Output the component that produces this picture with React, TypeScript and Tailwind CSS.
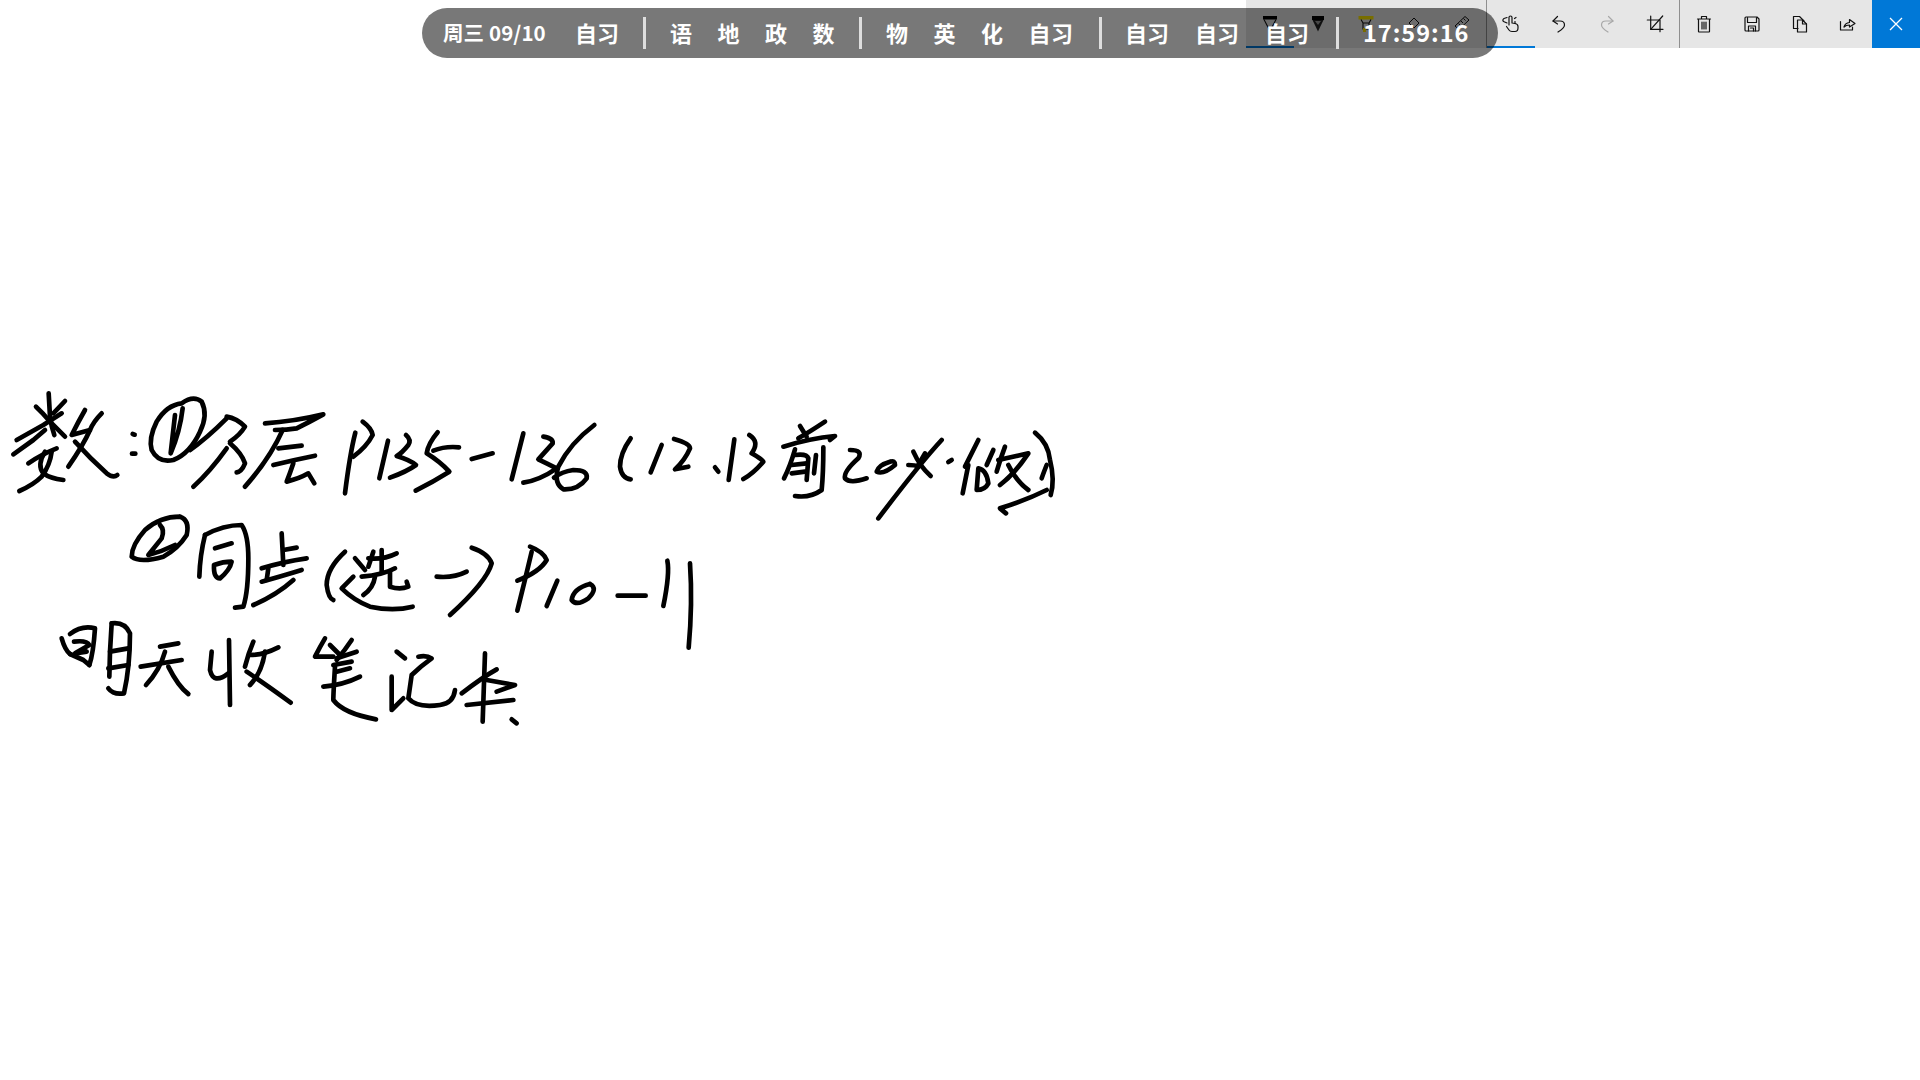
import React from "react";

const g1 = [
  "M146 25L150 95Q154 125 163 150","M195 48L160 85","M108 65Q130 85 150 110Q170 130 195 155","M50 165L130 120L185 85","M40 208L100 165L135 135","M85 235Q120 210 170 190","M135 200Q110 240 130 265Q150 280 190 285","M58 318Q100 300 125 275Q150 240 155 200",
  "M255 75Q235 110 215 150L270 135","M305 85Q280 110 270 135Q250 180 205 245","M225 170Q270 220 320 265Q340 280 352 270",
  "M398 147L404 149","M396 206L406 206",
  "M545 55Q500 60 470 110Q445 160 455 195Q475 235 520 225Q570 205 600 140Q625 90 605 50Q580 30 545 55","M525 90L512 205Q540 140 548 70",
  "M570 195Q620 160 680 100","M680 95Q710 100 735 125Q720 150 690 170","M690 175Q725 205 735 235Q725 260 710 262","M580 305Q630 260 680 190",
  "M795 115Q880 110 970 88Q930 110 890 130Q860 135 825 135","M848 135Q810 220 735 305","M835 190L905 182","M820 240Q880 225 945 212","M880 235Q870 265 860 290Q900 280 925 265L943 295",
];
const g2 = [
  "M76 68Q60 130 45 250","M98 35Q125 55 128 75Q110 110 70 140","M174 92L148 205","M228 75Q245 90 235 105Q215 130 200 138Q240 150 258 165Q230 185 180 203","M323 67Q295 100 290 130Q330 155 358 185Q310 215 257 242","M310 122Q345 108 387 112","M425 147L488 130","M580 70L545 208","M640 80Q670 85 668 100L625 148Q650 160 680 175Q630 210 580 218","M793 45Q720 100 685 170Q670 220 700 238Q745 240 770 205Q775 180 730 180Q695 185 672 203",
];
const g3 = [
  "M62 85Q30 130 30 170Q35 205 62 208","M155 105L122 187","M192 87Q240 100 240 115Q225 150 195 178L235 170","M315 172L325 185","M373 88L356 210","M418 75Q450 95 425 130Q460 150 460 155Q430 190 400 207",
  "M570 48L590 80","M645 35Q600 65 565 85","M520 110Q600 85 675 78L660 90","M555 118Q540 170 522 205","M555 135Q590 130 595 145L590 210","M545 165L590 160","M545 190L585 185","M618 135L612 190","M640 112Q640 190 635 240Q600 265 555 258",
  "M720 120Q760 120 745 145Q700 185 705 205Q720 222 770 205","M840 155Q805 165 800 185Q820 195 855 165Q855 150 840 155",
  "M995 90Q930 160 805 325","M895 165Q915 165 925 170","M910 125Q930 170 962 198","M945 130L925 165","M1015 156L1025 150",
  "M1105 90Q1085 130 1065 170","M1075 165L1058 250","M1150 120L1130 165","M1105 175L1100 240Q1125 240 1135 220Q1130 180 1105 175","M1185 110Q1170 150 1160 185","M1165 150L1255 130Q1215 190 1170 225","M1195 165Q1220 215 1255 240",
  "M1275 68Q1315 100 1320 150Q1335 210 1322 255","M1310 165Q1300 190 1295 205","M1310 240Q1250 270 1170 295L1188 310",
];
const g4 = [
  "M180 35Q120 35 75 75Q35 120 35 155Q60 175 130 155Q175 130 200 90Q210 45 180 35","M120 60Q135 75 125 100L85 150Q125 140 165 120",
  "M255 90Q240 150 238 215","M255 90Q310 60 365 60Q385 90 385 160Q385 260 370 305L345 308","M285 130L335 115","M282 180Q280 220 300 220Q330 195 335 170Q310 170 282 180",
  "M485 85L490 180","M490 135L530 128","M425 190Q490 170 560 160","M440 225L445 190","M425 230Q480 215 545 195","M520 225Q470 270 400 300",
  "M675 140Q620 190 620 240Q625 280 640 285",
  "M705 160L735 195","M700 215L665 250Q700 285 750 305Q820 320 878 305","M760 140L745 185","M745 160Q790 165 830 145","M725 215Q790 210 825 190","M785 135L785 200","M765 215Q760 250 730 270","M810 200L810 245Q840 255 865 245L860 230",
  "M950 215Q1000 220 1040 200","M1055 128Q1105 145 1115 175Q1100 230 990 330",
];
const g5 = [
  "M90 50Q130 65 140 90Q120 125 52 152","M95 65Q75 150 52 242","M172 152L140 228","M270 162Q220 175 215 210Q230 230 265 205Q295 175 270 162","M353 197L437 197","M502 92Q510 130 490 228","M570 100Q578 220 566 353",
];
const g6 = [
  "M35 85Q45 120 60 132","M60 72Q95 45 135 55Q130 130 118 165","M60 132L100 150L118 165","M72 95Q110 90 118 105L75 130L110 125",
  "M185 40L180 125L178 200","M185 40Q225 35 240 70Q240 170 222 250Q190 255 175 235","M180 125L235 115","M175 175L235 165",
  "M330 110L385 100","M272 170L395 150","M345 125Q330 180 288 225","M355 170Q385 230 415 252",
  "M485 125L480 180Q490 225 535 190","M537 90L540 285","M610 95Q595 130 585 170","M600 135Q640 135 685 112","M645 125Q635 190 600 225","M590 185Q650 225 722 278",
  "M825 85Q810 110 795 140L850 140","M840 105L870 135","M905 90Q885 120 860 150","M860 145L920 125","M850 165L905 155","M860 185L900 175","M820 230Q880 225 930 200","M855 170Q850 250 850 270Q880 310 978 328",
  "M1040 125L1065 145","M1025 200L1025 300L1060 265","M1105 140Q1130 135 1145 145Q1110 170 1085 195L1075 265Q1100 295 1170 285Q1210 280 1215 240",
  "M1305 130L1298 335","M1235 250Q1300 200 1340 178","M1310 210L1395 225L1340 245","M1250 285L1390 270","M1385 328L1400 340",
];

const Strokes = ({ x, y, d }: { x: number; y: number; d: string[] }) => (
  <g transform={`translate(${x} ${y}) scale(${1 / 3})`}>
    {d.map((p, i) => (
      <path key={i} d={p} />
    ))}
  </g>
);

const Ink = () => (
  <svg viewBox="0 48 1920 1032" className="block w-[1920px] h-[1032px]" fill="none" stroke="#000" strokeWidth={14} strokeLinecap="round" strokeLinejoin="round">
    <title>数:①分层 P135-136 (12.13前20%·做) ②同步(选一) P10-11 明天收笔记本</title>
    <Strokes x={0} y={385} d={g1} />
    <Strokes x={330} y={410} d={g2} />
    <Strokes x={610} y={410} d={g3} />
    <Strokes x={120} y={505} d={g4} />
    <Strokes x={500} y={530} d={g5} />
    <Strokes x={50} y={610} d={g6} />
  </svg>
);

const Ico = ({ children, stroke = "#111" }: { children: React.ReactNode; stroke?: string }) => (
  <svg width="20" height="20" viewBox="0 0 20 20" fill="none" stroke={stroke} strokeWidth={1.2} strokeLinecap="round" strokeLinejoin="round">
    {children}
  </svg>
);

const Btn = ({ children, active }: { children: React.ReactNode; active?: boolean }) => (
  <div className={`w-12 h-12 flex items-center justify-center ${active ? "border-b-2 border-[#0078d7] pt-[2px]" : ""}`}>{children}</div>
);

const Toolbar = () => (
  <div className="flex justify-end h-12">
    <div className="w-[674px] h-12 flex bg-[#e6e6e6]">
      <div className="w-60 h-12" />
      <div className="w-px h-12 bg-[#8f8f8f]" />
      <Btn active>
        <Ico>
          <path d="M8 11V3.500a1.500 1.500 0 0 1 3 0V9l3 .5q3 .5 3 3V14q0 3.500-3 3.500H11q-2 0-3-1.500L5.500 12.500" />
          <path d="M6 3.500L3 4.500Q1 6 2.500 7.500L6 9" />
          <path d="M13.500 4.500L15 3.500" />
          <path d="M14 9.500V7.500" />
        </Ico>
      </Btn>
      <Btn>
        <Ico>
          <path d="M8.500 2.500L4 7L8.500 10" />
          <path d="M4 7H11Q15.500 7 15.500 11Q15.500 14 9 18" />
        </Ico>
      </Btn>
      <Btn>
        <Ico stroke="#a8a8a8">
          <path d="M11.500 2.500L16 7L11.500 10" />
          <path d="M16 7H9Q4.500 7 4.500 11Q4.500 14 11 18" />
        </Ico>
      </Btn>
      <Btn>
        <Ico>
          <path d="M2.300 6H15V17.700" />
          <path d="M5.700 2V15.300H18" />
          <path d="M5.700 15.300L17.700 2" />
        </Ico>
      </Btn>
      <div className="w-px h-12 bg-[#8f8f8f]" />
      <Btn>
        <Ico>
          <path d="M3.500 5H16.500M7.500 5V2.500H12.500V5M4.500 5V17.500Q4.500 18 5 18H15Q15.500 18 15.500 17.500V5M8 8V15M10 8V15M12 8V15" />
        </Ico>
      </Btn>
      <Btn>
        <Ico>
          <path d="M3 4Q3 3 4 3H15L17 5V16Q17 17 16 17H4Q3 17 3 16Z" />
          <path d="M5.500 3.500V8.500H14.500V3.500M6.500 17V12H13.500V17M8.500 14H11.500V17" />
        </Ico>
      </Btn>
      <Btn>
        <Ico>
          <path d="M8 14.500H3.500V2.500H9.500L14 7" />
          <path d="M7.500 6H12.500L16.500 10V18H7.500Z" />
          <path d="M12.500 6V10H16.500" />
        </Ico>
      </Btn>
      <Btn>
        <Ico>
          <path d="M2.500 7.500V16H14.500V13" />
          <path d="M6 13Q7 9 11.500 8.500V5.500L17 9.500L11.500 13V11Q8 11 6 13Z" />
        </Ico>
      </Btn>
      <div className="w-12 h-12 flex items-center justify-center bg-[#0078d7]">
        <svg width="16" height="16" viewBox="0 0 16 16" stroke="#fff" strokeWidth={1.3}>
          <path d="M2 2L14 14M14 2L2 14" />
        </svg>
      </div>
    </div>
  </div>
);

/* pen tray: sits behind the translucent class-schedule pill */
const Pens = () => (
  <div className="absolute left-[1246px] top-0 w-[240px] h-12 flex">
    <div className="w-12 h-12 border-b-2 border-[#0078d7] flex justify-center pt-4">
      <svg width="20" height="26" viewBox="0 0 20 26" fill="none" stroke="#111" strokeWidth={1.1}>
        <rect x="3" y="0" width="14" height="3.500" fill="#000" stroke="none" />
        <path d="M4 3.500L10 15L16 3.500" />
        <path d="M10 15V20" stroke="#0078d7" strokeWidth={2} />
      </svg>
    </div>
    <div className="w-12 h-12 flex justify-center pt-4">
      <svg width="20" height="26" viewBox="0 0 20 26">
        <rect x="4" y="0" width="12" height="4" fill="#000" />
        <path d="M4.500 4L10 15.500L15.500 4Z" fill="#222" />
        <path d="M7 5H13L10 9Z" fill="#999" />
      </svg>
    </div>
    <div className="w-12 h-12 flex justify-center pt-4">
      <svg width="20" height="26" viewBox="0 0 20 26" fill="none" stroke="#111" strokeWidth={1.1}>
        <rect x="2.500" y="0" width="15" height="3.500" fill="#ffea00" stroke="none" />
        <path d="M5 3.500L7 7H13L15 3.500M7 7V13H13V7" />
        <path d="M7 12H10V16H7Z" fill="#ffe600" stroke="none" />
      </svg>
    </div>
    <div className="w-12 h-12 flex justify-center pt-4">
      <svg width="20" height="26" viewBox="0 0 20 26" fill="none" stroke="#111" strokeWidth={1}>
        <path d="M10 2L15 7L10 12L5 7Z" />
      </svg>
    </div>
    <div className="w-12 h-12 flex justify-center pt-4">
      <svg width="20" height="26" viewBox="0 0 20 26" fill="none" stroke="#111" strokeWidth={1}>
        <path d="M13 0.500L17 4L7 13.500L3 10Z" />
        <path d="M11.500 2.500L13.500 4.500M9 5L11 7M6.500 7.500L8.500 9.500" />
      </svg>
    </div>
  </div>
);

const Sep = () => <div className="w-[3px] h-8 bg-[#dedede]" />;

const Pill = () => (
  <div className="absolute left-[422px] top-2 w-[1076px] h-[50px] rounded-[25px] bg-black/[0.53] flex items-center text-white font-bold text-[22px] leading-none font-['Noto_Sans_CJK_SC','sans-serif'] whitespace-nowrap">
    <span className="ml-[21px] mb-[2px] w-[103px] text-[20.500px] tracking-[0.1px]">周三 09/10</span>
    <span className="ml-[29px] mb-[2px] w-[44px]">自习</span>
    <div className="ml-[24px] mr-[24px]"><Sep /></div>
    <div className="flex mb-[2px] gap-[25.500px] w-[165px]">
      <span>语</span>
      <span>地</span>
      <span>政</span>
      <span>数</span>
    </div>
    <div className="ml-[24px] mr-[24px]"><Sep /></div>
    <div className="flex mb-[2px] gap-[25.500px] w-[187.500px]">
      <span>物</span>
      <span>英</span>
      <span>化</span>
      <span className="tracking-[0.5px]">自习</span>
    </div>
    <div className="ml-[25.500px] mr-[23px]"><Sep /></div>
    <div className="flex mb-[2px] gap-[26px] w-[184px]">
      <span>自习</span>
      <span>自习</span>
      <span>自习</span>
    </div>
    <div className="ml-[27px] mr-[24px]"><Sep /></div>
    <span className="text-[23.500px] tracking-[1px]">17:59:16</span>
  </div>
);

export default function App() {
  return (
    <div className="relative w-[1920px] h-[1080px] overflow-hidden bg-white">
      <Toolbar />
      <Ink />
      <Pens />
      <Pill />
    </div>
  );
}
